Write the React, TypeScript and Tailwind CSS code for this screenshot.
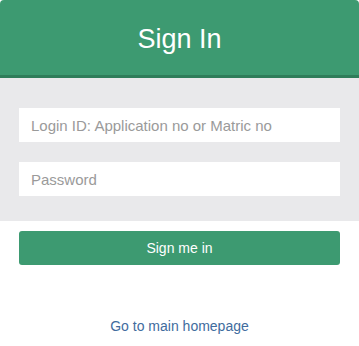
export default function App() {
  return (
    <div className="w-[359px] h-[346px] bg-white font-['Liberation_Sans',Arial,sans-serif]">
      <div className="h-[78px] bg-[#3d9a71] border-b-[3px] border-[#2f7d5a] rounded-t-[4px] flex items-center justify-center">
        <h1 className="text-[27px] text-white leading-none pt-[4px]">Sign In</h1>
      </div>
      <div className="bg-[#e9e9eb] px-[19px] pt-[30px] pb-[25px] flex flex-col gap-[20px]">
        <input
          className="h-[34px] bg-white px-[12px] text-[15px] text-[#555] placeholder:text-[#9a9a9a] outline-none"
          placeholder="Login ID: Application no or Matric no"
        />
        <input
          type="password"
          className="h-[34px] bg-white px-[12px] text-[15px] text-[#555] placeholder:text-[#9a9a9a] outline-none"
          placeholder="Password"
        />
      </div>
      <div className="px-[19px] pt-[10px]">
        <button className="w-full h-[34px] rounded-[3px] bg-[#3d9a71] text-white text-[14px]">
          Sign me in
        </button>
      </div>
      <div className="pt-[49px] text-center">
        <a href="#" className="text-[14px] text-[#416c9e]">
          Go to main homepage
        </a>
      </div>
    </div>
  )
}
